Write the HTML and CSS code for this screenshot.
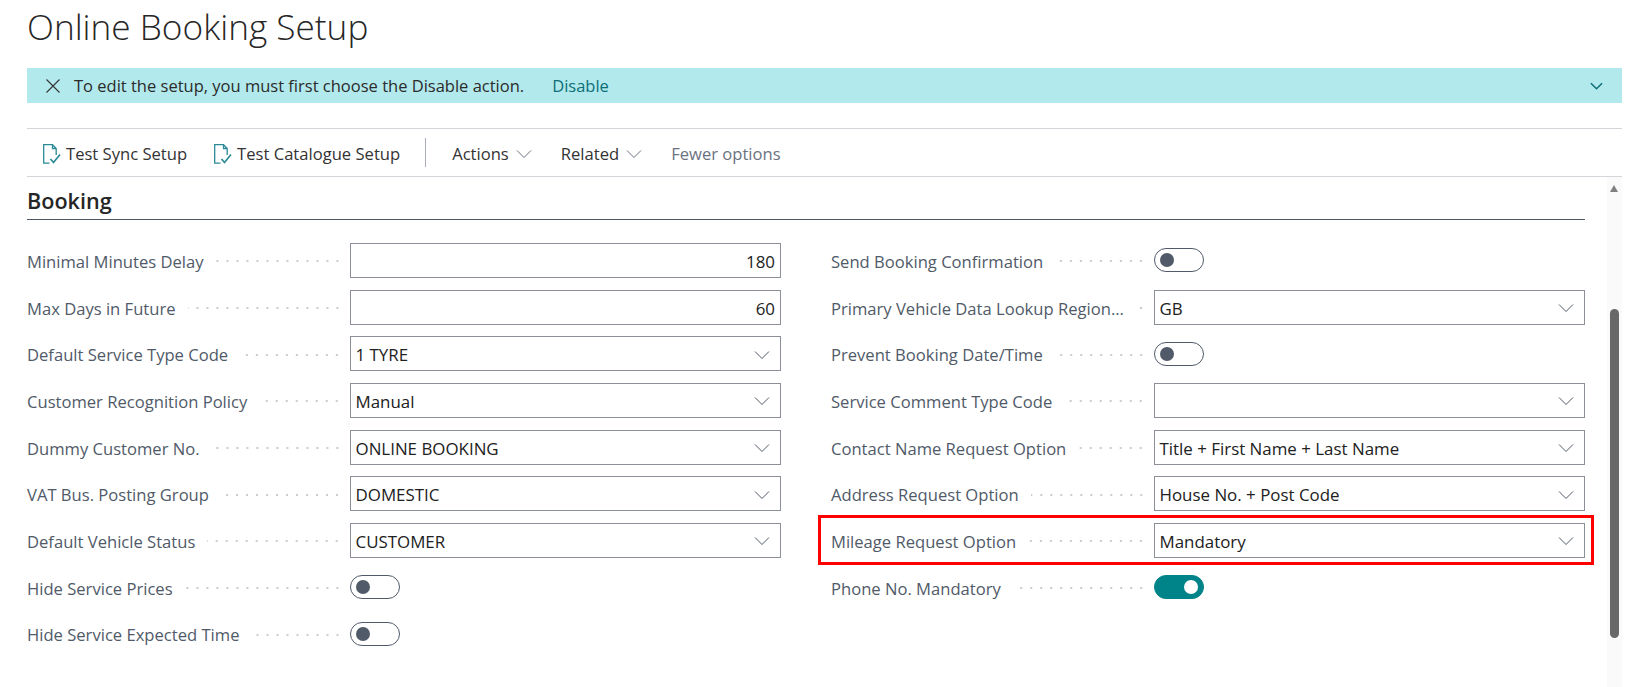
FILE: index.html
```html
<html>
<head>
    <title>Online Booking Setup</title>
    <link rel="stylesheet" href="styles.css">
</head>
<body>
    <svg class="sprites" width="0" height="0">
        <symbol id="chev" viewBox="0 0 16 10"><path d="M1 1.5 8 8.5 15 1.5" fill="none" stroke="currentColor"/></symbol>
        <symbol id="doc" viewBox="0 0 18 20">
            <path d="M6.5 19.2H.7V.6H9.5L13.2 4.5V11M9.5.6V4.5H13.2" fill="none" stroke="#2b8a96" stroke-width="1.3"/>
            <path d="M7.5 15 10.5 18.5 17 10.5" fill="none" stroke="#2b8a96" stroke-width="1.7"/>
        </symbol>
    </svg>

    <h1 class="title">Online Booking Setup</h1>

    <div class="banner">
        <svg class="banner-x" viewBox="0 0 14 14"><path d="M.5.5 13.5 13.5M13.5.5.5 13.5" stroke="#333" stroke-width="1.1"/></svg>
        <span class="banner-text">To edit the setup, you must first choose the Disable action.</span>
        <a class="banner-link">Disable</a>
        <svg class="banner-chev"><use href="#chev"/></svg>
    </div>

    <div class="toolbar">
        <div class="tool"><svg class="doc"><use href="#doc"/></svg>Test Sync Setup</div>
        <div class="tool"><svg class="doc"><use href="#doc"/></svg>Test Catalogue Setup</div>
        <div class="tool-sep"></div>
        <div class="tool tool-menu">Actions<svg class="tool-chev"><use href="#chev"/></svg></div>
        <div class="tool tool-menu">Related<svg class="tool-chev"><use href="#chev"/></svg></div>
        <div class="tool tool-muted">Fewer options</div>
    </div>

    <div class="main">
        <div class="content">
            <h2 class="section">Booking</h2>
            <div class="fields">
                <div class="column">
                    <div class="field"><span class="label">Minimal Minutes Delay</span><span class="dots"></span><div class="input num">180</div></div>
                    <div class="field"><span class="label">Max Days in Future</span><span class="dots"></span><div class="input num">60</div></div>
                    <div class="field"><span class="label">Default Service Type Code</span><span class="dots"></span><div class="input">1 TYRE<svg class="chev"><use href="#chev"/></svg></div></div>
                    <div class="field"><span class="label">Customer Recognition Policy</span><span class="dots"></span><div class="input">Manual<svg class="chev"><use href="#chev"/></svg></div></div>
                    <div class="field"><span class="label">Dummy Customer No.</span><span class="dots"></span><div class="input">ONLINE BOOKING<svg class="chev"><use href="#chev"/></svg></div></div>
                    <div class="field"><span class="label">VAT Bus. Posting Group</span><span class="dots"></span><div class="input">DOMESTIC<svg class="chev"><use href="#chev"/></svg></div></div>
                    <div class="field"><span class="label">Default Vehicle Status</span><span class="dots"></span><div class="input">CUSTOMER<svg class="chev"><use href="#chev"/></svg></div></div>
                    <div class="field"><span class="label">Hide Service Prices</span><span class="dots"></span><div class="value"><span class="toggle"></span></div></div>
                    <div class="field"><span class="label">Hide Service Expected Time</span><span class="dots"></span><div class="value"><span class="toggle"></span></div></div>
                </div>
                <div class="column">
                    <div class="field"><span class="label">Send Booking Confirmation</span><span class="dots"></span><div class="value"><span class="toggle"></span></div></div>
                    <div class="field"><span class="label">Primary Vehicle Data Lookup Region...</span><span class="dots"></span><div class="input">GB<svg class="chev"><use href="#chev"/></svg></div></div>
                    <div class="field"><span class="label">Prevent Booking Date/Time</span><span class="dots"></span><div class="value"><span class="toggle"></span></div></div>
                    <div class="field"><span class="label">Service Comment Type Code</span><span class="dots"></span><div class="input"><svg class="chev"><use href="#chev"/></svg></div></div>
                    <div class="field"><span class="label">Contact Name Request Option</span><span class="dots"></span><div class="input">Title + First Name + Last Name<svg class="chev"><use href="#chev"/></svg></div></div>
                    <div class="field"><span class="label">Address Request Option</span><span class="dots"></span><div class="input">House No. + Post Code<svg class="chev"><use href="#chev"/></svg></div></div>
                    <div class="field marked"><span class="label">Mileage Request Option</span><span class="dots"></span><div class="input">Mandatory<svg class="chev"><use href="#chev"/></svg></div></div>
                    <div class="field"><span class="label">Phone No. Mandatory</span><span class="dots"></span><div class="value"><span class="toggle on"></span></div></div>
                </div>
            </div>
        </div>
        <div class="scrollbar">
            <span class="scroll-up"></span>
            <span class="scroll-thumb"></span>
        </div>
    </div>
</body>
</html>
```

FILE: styles.css
```css
html, body {
    height: 100%;
}

body {
    box-sizing: border-box;
    margin: 0;
    padding: 0 16px 0 27px;
    overflow: hidden;
    display: flex;
    flex-direction: column;
    background-color: #fff;
    color: #212121;
    font-family: "Open Sans", sans-serif;
    font-size: 16.6px;
}

.sprites {
    position: absolute;
}

.title {
    height: 68px;
    margin: 0;
    font-size: 35.2px;
    font-weight: 300;
    line-height: 52px;
    color: #262626;
}

.banner {
    display: flex;
    align-items: center;
    height: 35px;
    background-color: #b2e9ec;
    padding: 0 19px;
    font-size: 16.5px;
}

.banner-x {
    width: 14px;
    height: 14px;
    margin-right: 14px;
}

.banner-text {
    color: #2b2b2b;
}

.banner-link {
    margin-left: 28px;
    color: #0c6f78;
}

.banner-chev {
    width: 13px;
    height: 8px;
    margin-left: auto;
    color: #0c6f78;
    stroke-width: 1.9;
}

.toolbar {
    display: flex;
    align-items: center;
    box-sizing: border-box;
    height: 49px;
    margin-top: 25px;
    padding: 2px 0 0 16px;
    border-top: 1px solid #d3d5da;
    border-bottom: 1px solid #d3d5da;
}

.tool {
    display: flex;
    align-items: center;
    margin-right: 27px;
    color: #333;
}

.tool-menu {
    margin-right: 29px;
}

.tool-muted {
    color: #6b7280;
}

.doc {
    width: 18px;
    height: 20px;
    margin-right: 5px;
}

.tool-sep {
    width: 1px;
    height: 29px;
    margin: -2px 26px 0 -2px;
    background-color: #a9adb5;
}

.tool-chev {
    width: 16px;
    height: 10px;
    margin-left: 7px;
    color: #6b7280;
    stroke-width: 1;
}

.main {
    flex: 1;
    display: flex;
}

.content {
    flex: 1;
}

.section {
    height: 43px;
    margin: 0;
    padding-top: 8px;
    font-size: 21.6px;
    font-weight: 600;
    line-height: 32px;
    color: #262626;
    border-bottom: 1px solid #4b5563;
    box-sizing: border-box;
}

.fields {
    display: flex;
    gap: 50px;
    padding-top: 17px;
}

.column {
    flex: 1;
}

.field {
    display: flex;
    align-items: center;
    height: 46.7px;
    color: #505a68;
}

.marked {
    position: relative;
}

.marked::after {
    content: "";
    position: absolute;
    top: -2px;
    right: -9px;
    bottom: -1px;
    left: -13px;
    border: 3px solid #f00;
}

.label {
    padding-top: 2px;
    white-space: nowrap;
}

.dots {
    flex: 1;
    height: 2px;
    margin: 2px 8px 0 12px;
    background-image: radial-gradient(circle, #c9ccd1 1px, transparent 1px);
    background-size: 10px 2px;
    background-position: right;
}

.input, .value {
    flex: none;
    display: flex;
    align-items: center;
    box-sizing: border-box;
    width: 431px;
    height: 35px;
}

.input {
    padding: 2px 5px 0 4.5px;
    border: 1px solid #8a8f98;
    color: #212121;
    font-size: 16.9px;
}

.num {
    justify-content: flex-end;
}

.chev {
    width: 16px;
    height: 10px;
    margin: 0 5px 0 auto;
    color: #505a68;
    stroke-width: 1;
}

.toggle {
    position: relative;
    box-sizing: border-box;
    width: 50px;
    height: 24px;
    border: 1px solid #505a68;
    border-radius: 12px;
}

.toggle::after {
    content: "";
    position: absolute;
    top: 4px;
    left: 5px;
    width: 14px;
    height: 14px;
    border-radius: 50%;
    background-color: #505a68;
}

.toggle.on {
    background-color: #008489;
    border-color: #008489;
}

.toggle.on::after {
    left: auto;
    right: 5px;
    background-color: #fff;
}

.scrollbar {
    flex: none;
    position: relative;
    width: 15px;
    margin-left: 22px;
    background-color: #fafafa;
}

.scroll-up {
    position: absolute;
    top: 8px;
    left: 3px;
    width: 0;
    height: 0;
    border-left: 4.5px solid transparent;
    border-right: 4.5px solid transparent;
    border-bottom: 7px solid #808080;
}

.scroll-thumb {
    position: absolute;
    top: 132px;
    left: 3px;
    width: 9px;
    height: 329px;
    border-radius: 5px;
    background-color: #686868;
}
```
